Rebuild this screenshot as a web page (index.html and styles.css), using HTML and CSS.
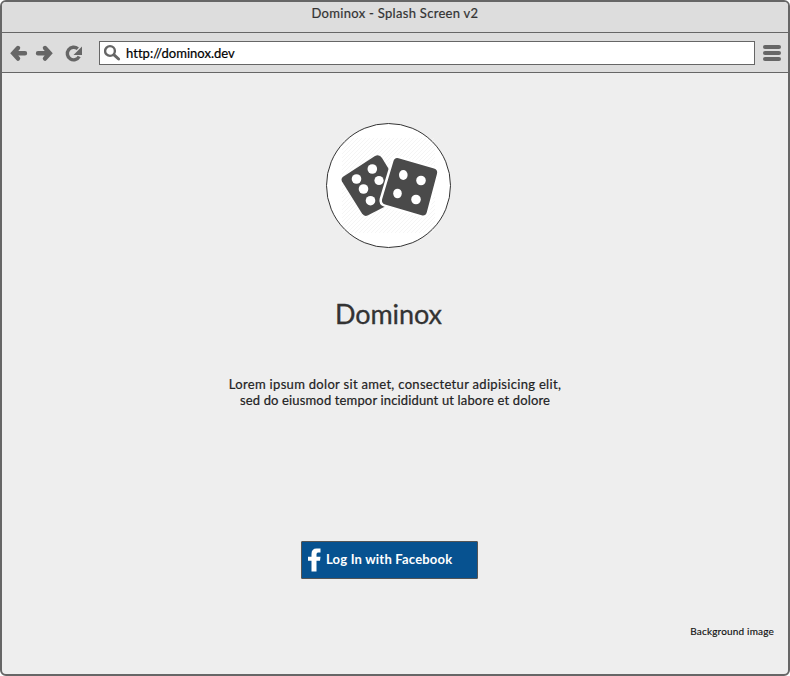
FILE: index.html
```html
<!DOCTYPE html>
<html lang="en">
<head>
<meta charset="utf-8">
<title>Dominox - Splash Screen v2</title>
<link rel="stylesheet" href="styles.css">
</head>
<body>
<div class="window">
  <header class="titlebar"><span>Dominox - Splash Screen v2</span></header>
  <nav class="toolbar">
    <svg class="nav-icons" width="90" height="38" viewBox="2 33 90 38">
      <g fill="none" stroke="#666" stroke-width="4.4" stroke-linecap="round">
        <path d="M18 47l-4.800 5.300 4.800 5.300M14 52.300h11"/>
        <path d="M45 47l4.800 5.300-4.800 5.300M49 52.300h-11"/>
      </g>
      <path d="M77.800 47.800A6.300 6.300 0 1 0 79.200 55.500" fill="none" stroke="#666" stroke-width="3.400"/>
      <path d="M82 45.500v8.500h-8.500z" fill="#666"/>
    </svg>
    <div class="address">
      <svg width="18" height="18" viewBox="0 0 18 18" fill="none" stroke="#666">
        <circle cx="6" cy="7" r="4.900" stroke-width="2.400"/>
        <path d="M10 10.800l4.600 4.200" stroke-width="3" stroke-linecap="round"/>
      </svg>
      <span class="url">http://dominox.dev</span>
    </div>
    <div class="menu"><i></i><i></i><i></i></div>
  </nav>
  <main class="page">
    <svg class="logo" width="126" height="126" viewBox="325 122 126 126">
      <defs>
        <pattern id="hatch" width="4" height="4" patternUnits="userSpaceOnUse">
          <path d="M-1 1l2-2M0 4l4-4M3 5l2-2" stroke="#f5f5f5" stroke-width="1"/>
        </pattern>
      </defs>
      <circle cx="388.500" cy="185.500" r="62" fill="#fff"/>
      <path d="M342 138h93v95h-93z" fill="url(#hatch)"/>
      <circle cx="388.500" cy="185.500" r="62" fill="none" stroke="#333" stroke-width="1"/>
      <path d="M343.500 176.500l31.500-20.500q4.500-2 7 2l22 36-14 10-22.500 11.500q-3 1.500-5.500-2l-20-32q-1.500-3 1.500-5z" fill="#4a4a4a"/>
      <path d="M398.500 158.300l35.500 10.200q4 1.300 3 5.200l-10.200 38.500q-1.200 4-5.200 3l-36.500-10.800q-4-1.300-3-5.200l11.200-37.500q1.200-4.400 5.200-3.400z" fill="#4a4a4a" stroke="#fff" stroke-width="5" paint-order="stroke"/>
      <g fill="#fff">
        <circle cx="372.300" cy="169" r="4.800"/><circle cx="356.500" cy="179" r="4.800"/><circle cx="379" cy="180.500" r="4.600"/><circle cx="363.500" cy="189" r="4.800"/><circle cx="370.500" cy="200.700" r="4.800"/>
        <ellipse cx="403.300" cy="175" rx="4.300" ry="4.900"/><circle cx="421" cy="180.500" r="4.800"/><ellipse cx="397.500" cy="193.500" rx="4.300" ry="4.800"/><circle cx="416" cy="199.500" r="4.800"/>
      </g>
    </svg>
    <h1>Dominox</h1>
    <p class="intro"><span class="line-one">Lorem ipsum dolor sit amet, consectetur adipisicing elit,</span><br><span class="line-two">sed do eiusmod tempor incididunt ut labore et dolore</span></p>
    <a class="login">
      <svg width="14" height="24" viewBox="0 0 14 24"><path d="M3.500 23.500V12.800H0V8.800H3.500V6Q3.500 .5 8.500 .5H12.500v4H10Q8.500 4.500 8.500 6.300v2.500h4l-.5 4H8.500V23.500z" fill="#fff"/></svg>
      <span class="login-label">Log In with Facebook</span>
    </a>
    <div class="note"><span>Background image</span></div>
  </main>
</div>
</body>
</html>
```
FILE: styles.css
```css
* { box-sizing: border-box; }
body { margin: 0; background: #fff; font-family: Lato, "Liberation Sans", sans-serif; color: #333; }
.window { width: 790px; height: 676px; border: 2px solid #666; border-radius: 6px; background: #eee; overflow: hidden; display: flex; flex-direction: column; }
.titlebar { height: 31px; background: #ddd; border-bottom: 1px solid #666; text-align: center; padding-top: 3px; font-size: 13px; line-height: 17px; letter-spacing: .3px; -webkit-text-stroke: .2px; }
.toolbar { height: 40px; background: #ddd; border-bottom: 1px solid #666; display: flex; align-items: center; }
.nav-icons { flex: none; margin-right: 7px; }
.address { width: 656px; height: 24px; border: 1px solid #666; background: #fff; display: flex; align-items: center; padding-left: 4px; }
.url { margin-left: 4px; color: #000; font-size: 13px; letter-spacing: .03px; -webkit-text-stroke: .2px; }
.menu { width: 18px; margin-left: 8px; display: flex; flex-direction: column; gap: 2px; }
.menu i { height: 4px; border-radius: 2px; background: #666; }
.page { flex: 1; display: flex; flex-direction: column; align-items: center; padding-top: 49px; }
.logo { margin-right: 14px; }
h1 { margin: 48px 13px 0 0; font-size: 27px; line-height: 36px; font-weight: 400; letter-spacing: -.1px; -webkit-text-stroke: .3px; }
.intro { margin: 44px 0 0; text-align: center; font-size: 13px; line-height: 16px; white-space: nowrap; color: #222; -webkit-text-stroke: .2px; }
.line-one { letter-spacing: .31px; }
.line-two { letter-spacing: .15px; }
.login { width: 177px; height: 38px; margin: 133px 11px 0 0; background: #075290; border: 1px solid #555; border-radius: 1px; color: #fff; display: flex; align-items: center; padding-left: 6px; gap: 4px; font-size: 13px; font-weight: 700; white-space: nowrap; }
.login-label { letter-spacing: .2px; padding-bottom: 2px; }
.note { align-self: flex-end; margin: 45px 14px 0 0; font-size: 10px; line-height: 15px; color: #111; letter-spacing: .18px; -webkit-text-stroke: .15px; }
```
